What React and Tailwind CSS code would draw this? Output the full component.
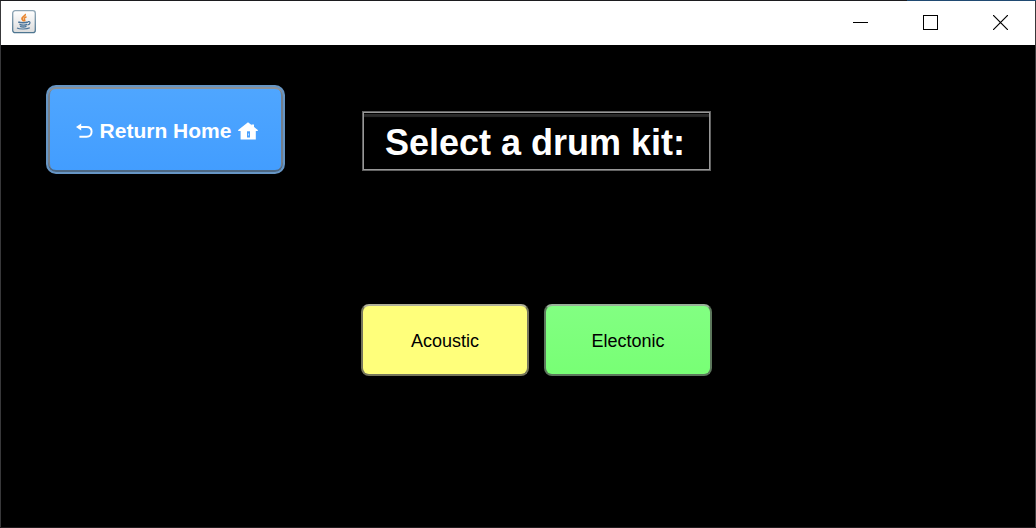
import React from "react";

function JavaIcon() {
  return (
    <svg width="24" height="24" viewBox="0 0 24 24" aria-hidden="true">
      <defs>
        <linearGradient id="cupFrame" x1="0" y1="0" x2="0" y2="1">
          <stop offset="0" stopColor="#8fa6b5" />
          <stop offset="1" stopColor="#4d7590" />
        </linearGradient>
        <linearGradient id="cupFace" x1="0" y1="0" x2="0" y2="1">
          <stop offset="0" stopColor="#ffffff" />
          <stop offset="1" stopColor="#dcdcdc" />
        </linearGradient>
      </defs>
      <rect x="0.7" y="0.7" width="22.6" height="22" rx="2.5" fill="url(#cupFace)" stroke="url(#cupFrame)" strokeWidth="1.3" />
      <path d="M13.2 4c.8 1.700-3.700 3-3.200 4.800.3 1.100 1.500 1.500 1.500 2.700" fill="none" stroke="#e8842c" strokeWidth="1.800" />
      <path d="M14.500 6.800c-1.500.6-2.500 1.300-2.200 2.200.3.800 1 1.200.2 2.400" fill="none" stroke="#e8842c" strokeWidth="1.500" />
      <path d="M6.300 12c1.800.9 7.600.9 9.600 0M7.500 14.300c2 .8 6 .8 7.700 0M8 16.400c1.800.7 4.800.7 6.500 0" fill="none" stroke="#4a7398" strokeWidth="1.400" />
      <path d="M16 11.700c2.800-.6 2.700 2.600-.5 3.300M5 18c2.500 1.400 10 1.300 12.800-.3" fill="none" stroke="#4a7398" strokeWidth="1.200" />
    </svg>
  );
}

function ReturnArrow() {
  return (
    <svg width="17" height="16" viewBox="0 0 17 16" aria-hidden="true">
      <path d="M4 4h6.500C13.800 4 15.600 5.600 15.600 8.600s-1.800 5.200-5.100 5.200H3.400" fill="none" stroke="#fff" strokeWidth="1.900" />
      <path d="M0 4L5.200 0.400V7.600z" fill="#fff" />
    </svg>
  );
}

function House() {
  return (
    <svg width="20" height="18" viewBox="0 0 20 18" aria-hidden="true">
      <path d="M10 0.300L19.800 8V9H17.800V17.500H2.600V9H0.200V8z" fill="#fff" />
      <path d="M13.500 2.500h2.500v4h-2.500z" fill="#fff" />
      <rect x="9" y="9.300" width="3" height="6.200" fill="#47a0ff" />
      <path d="M10.500 11.500v2" stroke="#b9dbff" strokeWidth="1" />
    </svg>
  );
}

function TitleBar() {
  const control = "flex h-[43px] w-[70px] items-center justify-center";
  return (
    <header className="flex h-11 items-start justify-between bg-white text-black">
      <div className="flex h-[42px] items-center pl-[11px]">
        <JavaIcon />
      </div>
      <div className="flex">
        <button type="button" aria-label="Minimize" className={control}>
          <svg width="15" height="15" viewBox="0 0 15 15" shapeRendering="crispEdges">
            <path d="M0 7.500h15" stroke="currentColor" />
          </svg>
        </button>
        <button type="button" aria-label="Maximize" className={control}>
          <svg width="15" height="15" viewBox="0 0 15 15" shapeRendering="crispEdges">
            <rect x="0.500" y="0.500" width="14" height="14" fill="none" stroke="currentColor" />
          </svg>
        </button>
        <button type="button" aria-label="Close" className={control}>
          <svg width="15" height="15" viewBox="0 0 15 15">
            <path d="M0 0l15 15M15 0L0 15" stroke="currentColor" strokeWidth="1.200" />
          </svg>
        </button>
      </div>
    </header>
  );
}

export default function App() {
  return (
    <div className="flex min-h-screen flex-col bg-black font-['Liberation_Sans',Arial,sans-serif]">
      <div className="flex h-px">
        <div className="flex-1 bg-[#1c1c1f]" />
        <div className="w-[129px] bg-[#204a72]" />
      </div>
      <div className="flex flex-1 flex-col border-x border-[#38383a]">
        <TitleBar />
        <main className="flex flex-1 items-start gap-[76px] pt-10 pl-[45px]">
          <button
            type="button"
            className="flex h-[89px] w-[239px] items-center justify-center gap-[7px] rounded-[10px] border-2 border-[#6695c4] bg-linear-to-b from-[#4fa6ff] to-[#429dff] pt-0.5 pl-[3px] text-[21px] font-bold whitespace-nowrap text-white shadow-[inset_0_2px_0_#8b9299,inset_0_-2px_0_#4d6782,inset_2px_0_0_#747f8b,inset_-2px_0_0_#747f8b]"
          >
            <ReturnArrow />
            Return Home
            <House />
          </button>
          <section className="flex w-[351px] flex-col gap-[133px] pt-[26px]">
            <h1 className="mx-px flex h-[60px] items-center justify-center border border-[#626262] pt-1 pr-[3px] text-4xl font-bold whitespace-nowrap text-white shadow-[inset_0_0_0_1px_#989898,inset_0_2px_0_#000,inset_0_5px_1px_#2a2a2a]">
              Select a drum kit:
            </h1>
            <div className="grid grid-cols-2 gap-[15px]">
              <button
                type="button"
                className="h-[72px] rounded-lg border-2 border-[#77775c] border-t-[#b0b099] bg-[#ffff7b] pt-0.5 text-lg text-black"
              >
                Acoustic
              </button>
              <button
                type="button"
                className="h-[72px] rounded-lg border-2 border-[#5c775c] border-t-[#99b099] bg-linear-to-b from-[#82ff82] to-[#78ff75] pt-0.5 text-lg text-black"
              >
                Electonic
              </button>
            </div>
          </section>
        </main>
      </div>
      <div className="h-px bg-[#201c1e]" />
    </div>
  );
}
